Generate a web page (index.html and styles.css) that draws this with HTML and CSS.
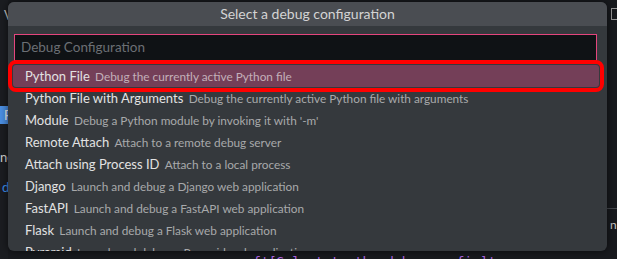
FILE: index.html
```html
<!DOCTYPE html>
<html lang="en">
<head>
  <meta charset="UTF-8">
  <title>Select a debug configuration</title>
  <link rel="stylesheet" href="styles.css">
</head>
<body>
  <div class="workbench">
    <div class="side-left">
      <div class="side-title">V</div>
      <div class="side-tab">F</div>
      <div class="side-text">nc</div>
      <div class="side-link">d</div>
    </div>
    <div class="editor">
      <div class="editor-line">f'[Select_to the debug config]'</div>
    </div>
    <div class="side-right">
      <div class="side-box"></div>
      <div class="side-rule"></div>
      <div class="side-char">n</div>
    </div>
  </div>

  <div class="quick-pick">
    <div class="quick-title">Select a debug configuration</div>
    <div class="quick-body">
      <div class="quick-input">Debug Configuration</div>
      <div class="quick-list">
        <div class="quick-row selected">
          <span class="label">Python File</span>
          <span class="desc">Debug the currently active Python file</span>
        </div>
        <div class="quick-row">
          <span class="label">Python File with Arguments</span>
          <span class="desc">Debug the currently active Python file with arguments</span>
        </div>
        <div class="quick-row">
          <span class="label">Module</span>
          <span class="desc">Debug a Python module by invoking it with '-m'</span>
        </div>
        <div class="quick-row">
          <span class="label">Remote Attach</span>
          <span class="desc">Attach to a remote debug server</span>
        </div>
        <div class="quick-row">
          <span class="label">Attach using Process ID</span>
          <span class="desc">Attach to a local process</span>
        </div>
        <div class="quick-row">
          <span class="label">Django</span>
          <span class="desc">Launch and debug a Django web application</span>
        </div>
        <div class="quick-row">
          <span class="label">FastAPI</span>
          <span class="desc">Launch and debug a FastAPI web application</span>
        </div>
        <div class="quick-row">
          <span class="label">Flask</span>
          <span class="desc">Launch and debug a Flask web application</span>
        </div>
        <div class="quick-row">
          <span class="label">Pyramid</span>
          <span class="desc">Launch and debug a Pyramid web application</span>
        </div>
      </div>
    </div>
  </div>
</body>
</html>
```

FILE: styles.css
```css
* {
  margin: 0;
  padding: 0;
  box-sizing: border-box;
}

body {
  width: 617px;
  height: 259px;
  overflow: hidden;
  background-color: #181a1e;
  font-family: 'Lato', 'Noto Sans', sans-serif;
  position: relative;
}

.workbench {
  display: grid;
  grid-template-columns: 8px 1fr 10px;
  height: 259px;
  overflow: hidden;
}

.side-left {
  background-color: #1b1d21;
  font-size: 13px;
  overflow: hidden;
}

.side-title {
  color: #c8c8c8;
  padding: 7px 0 0 4px;
  height: 106px;
}

.side-tab {
  background-color: #4b8fe2;
  color: #f0f0f0;
  height: 18px;
  line-height: 18px;
  padding-left: 4px;
  margin-bottom: 25px;
}

.side-text {
  color: #d0d0d0;
  height: 30px;
}

.side-link {
  color: #3b8eea;
  padding-left: 2px;
}

.editor {
  padding-top: 254px;
  padding-left: 245px;
  overflow: hidden;
}

.editor-line {
  color: #b267e6;
  font-family: 'DejaVu Sans Mono', monospace;
  font-size: 13px;
  white-space: nowrap;
}

.side-right {
  display: flex;
  flex-direction: column;
  overflow: hidden;
}

.side-box {
  width: 8px;
  height: 12px;
  margin: 8px 0 0 4px;
  border: 1px solid #9a9a9a;
}

.side-rule {
  height: 1px;
  background-color: #45484d;
  margin-top: 188px;
}

.side-char {
  color: #c8c8c8;
  font-size: 12px;
  padding: 8px 0 0 3px;
}

/* quick pick overlays the editor */
.quick-pick {
  position: absolute;
  left: 8px;
  top: 2px;
  width: 599px;
  height: 249px;
  border-radius: 6px;
  background-color: #35393d;
  overflow: hidden;
  box-shadow: 0 0 8px rgba(0, 0, 0, 0.6);
}

.quick-title {
  height: 24px;
  line-height: 24px;
  text-align: center;
  background-color: #4a4d52;
  color: #d4d4d4;
  font-size: 14px;
}

.quick-body {
  padding: 8px 10px 0 6px;
}

.quick-input {
  height: 27px;
  line-height: 25px;
  padding-left: 6px;
  border: 1px solid #e4457d;
  background-color: #0f1215;
  color: #6b6f74;
  font-size: 13.5px;
}

.quick-list {
  margin: 4px -2px 0 -1px;
}

.quick-row {
  height: 22px;
  line-height: 22px;
  padding-left: 12px;
  white-space: nowrap;
  font-size: 13px;
}

.quick-row.selected {
  background-color: #743f58;
  border-radius: 3px;
  outline: 4px solid #ff0000;
  outline-offset: 1px;
}

.label {
  color: #e2e2e2;
}

.desc {
  color: #a8a9ab;
  font-size: 11.8px;
  margin-left: 2px;
}

.selected .desc {
  color: #c3b0ba;
}
```
